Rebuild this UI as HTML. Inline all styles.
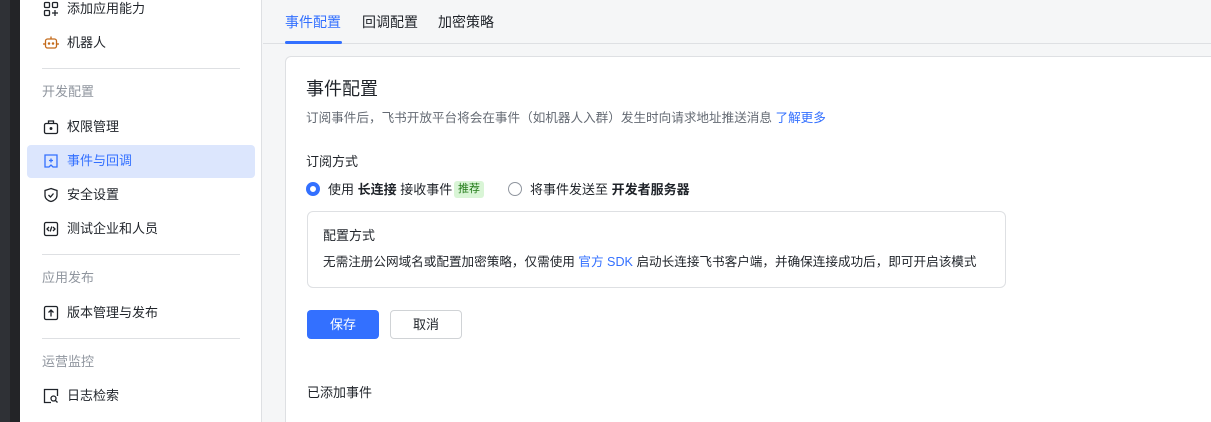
<!DOCTYPE html><html style="width:1211px;height:422px;overflow:hidden"><head><meta charset="utf-8"><style>
*{margin:0;padding:0;box-sizing:border-box}
body{width:1211px;height:422px;overflow:hidden;background:#f5f6f7;font-family:"Liberation Sans","Noto Sans CJK SC",sans-serif;color:#1f2329;position:relative}
.a{position:absolute;white-space:nowrap;line-height:1}
.si{font-size:13px;left:67px}
.sec{font-size:13px;left:42px;color:#8f959e}
.dv{position:absolute;left:42px;width:198px;height:1px;background:#dee0e3}
.ic{position:absolute;left:43px;width:16px;height:16px}
</style></head><body>
<div style="position:absolute;left:0;top:0;width:10px;height:422px;background:#2f3136"></div>
<div style="position:absolute;left:10px;top:0;width:10px;height:422px;background:#232427"></div>
<div style="position:absolute;left:20px;top:0;width:242px;height:422px;background:#fff;border-right:1px solid #dee0e3"></div>
<svg class="ic" style="top:1px" viewBox="0 0 16 16" fill="none" stroke="#1f2329" stroke-width="1.3"><rect x="1.5" y="1.5" width="5" height="5" rx="1"/><rect x="9.5" y="1.5" width="5" height="5" rx="1"/><rect x="1.5" y="9.5" width="5" height="5" rx="1"/><path d="M12 9v6M9 12h6"/></svg>
<div class="a si" style="top:2px">添加应用能力</div>
<svg class="ic" style="top:35px" viewBox="0 0 16 16" fill="none" stroke="#c36a1a" stroke-width="1.3"><rect x="2.5" y="4" width="11" height="9" rx="2"/><path d="M8 1.5v2.5M1 8v2M15 8v2"/><circle cx="6" cy="8.5" r=".6" fill="#c36a1a"/><circle cx="10" cy="8.5" r=".6" fill="#c36a1a"/></svg>
<div class="a si" style="top:36px">机器人</div>
<div class="dv" style="top:68px"></div>
<div class="a sec" style="top:85px">开发配置</div>
<svg class="ic" style="top:119px" viewBox="0 0 16 16" fill="none" stroke="#1f2329" stroke-width="1.3"><rect x="1.5" y="4.5" width="13" height="10" rx="1.5"/><path d="M5.5 4.5V2h5v2.5"/><circle cx="8" cy="9.5" r=".8" fill="#1f2329"/></svg>
<div class="a si" style="top:120px">权限管理</div>
<div style="position:absolute;left:27px;top:145px;width:228px;height:33px;background:#dce6fd;border-radius:4px"></div>
<svg class="ic" style="top:153px" viewBox="0 0 16 16" fill="none" stroke="#3370ff" stroke-width="1.3"><path d="M2 2h12v12h-4l-2-2-2 2H2z"/><path d="M8 5.5v4M6 7.5h4"/></svg>
<div class="a si" style="top:154px;color:#3370ff">事件与回调</div>
<svg class="ic" style="top:187px" viewBox="0 0 16 16" fill="none" stroke="#1f2329" stroke-width="1.3"><path d="M8 1.5l6 2v5c0 3-3 5.5-6 6-3-.5-6-3-6-6v-5z"/><path d="M5.5 8l2 2 3-3.5"/></svg>
<div class="a si" style="top:188px">安全设置</div>
<svg class="ic" style="top:221px" viewBox="0 0 16 16" fill="none" stroke="#1f2329" stroke-width="1.3"><rect x="1.5" y="1.5" width="13" height="13" rx="1.5"/><path d="M6 6l-2 2 2 2M10 6l2 2-2 2M8.8 5.5l-1.6 5"/></svg>
<div class="a si" style="top:222px">测试企业和人员</div>
<div class="dv" style="top:254px"></div>
<div class="a sec" style="top:271px">应用发布</div>
<svg class="ic" style="top:305px" viewBox="0 0 16 16" fill="none" stroke="#1f2329" stroke-width="1.3"><rect x="1.5" y="1.5" width="13" height="13" rx="1.5"/><path d="M8 11.5V5M5.5 7.5L8 5l2.5 2.5"/></svg>
<div class="a si" style="top:306px">版本管理与发布</div>
<div class="dv" style="top:338px"></div>
<div class="a sec" style="top:355px">运营监控</div>
<svg class="ic" style="top:388px" viewBox="0 0 16 16" fill="none" stroke="#1f2329" stroke-width="1.3"><path d="M8 14.5H1.5v-13h13V8"/><circle cx="10.5" cy="10.5" r="2.5"/><path d="M12.3 12.3l2.2 2.2"/></svg>
<div class="a si" style="top:389px">日志检索</div>

<div style="position:absolute;left:263px;top:43px;width:948px;height:1px;background:#dee0e3"></div>
<div class="a" style="left:285px;top:15px;font-size:14px;color:#3370ff">事件配置</div>
<div style="position:absolute;left:285px;top:41px;width:57px;height:3px;background:#3370ff;border-radius:2px"></div>
<div class="a" style="left:362px;top:15px;font-size:14px">回调配置</div>
<div class="a" style="left:438px;top:15px;font-size:14px">加密策略</div>

<div style="position:absolute;left:285px;top:56px;width:940px;height:366px;background:#fff;border:1px solid #dee0e3;border-bottom:none;border-radius:6px 6px 0 0"></div>
<div class="a" style="left:306px;top:80px;font-size:18px">事件配置</div>
<div class="a" style="left:306px;top:112px;font-size:12.6px;color:#646a73">订阅事件后，飞书开放平台将会在事件（如机器人入群）发生时向请求地址推送消息 <span style="color:#3370ff">了解更多</span></div>
<div class="a" style="left:306px;top:155px;font-size:13px">订阅方式</div>
<div style="position:absolute;left:306px;top:182px;width:14px;height:14px;border-radius:50%;border:4px solid #3370ff;background:#fff"></div>
<div class="a" style="left:328px;top:183px;font-size:13px">使用 <b>长连接</b> 接收事件</div>
<div class="a" style="left:454px;top:181px;font-size:11px;background:#d9f5d6;color:#237b19;padding:3px 4px;border-radius:3px">推荐</div>
<div style="position:absolute;left:508px;top:182px;width:14px;height:14px;border-radius:50%;border:1px solid #8f959e"></div>
<div class="a" style="left:530px;top:183px;font-size:13px">将事件发送至 <b>开发者服务器</b></div>
<div style="position:absolute;left:307px;top:211px;width:699px;height:77px;border:1px solid #dee0e3;border-radius:6px"></div>
<div class="a" style="left:323px;top:229px;font-size:13px">配置方式</div>
<div class="a" style="left:323px;top:256px;font-size:12.6px">无需注册公网域名或配置加密策略，仅需使用 <span style="color:#3370ff">官方 SDK</span> 启动长连接飞书客户端，并确保连接成功后，即可开启该模式</div>
<div class="a" style="left:307px;top:310px;width:72px;height:29px;background:#3370ff;border-radius:4px;color:#fff;font-size:13px;line-height:29px;text-align:center">保存</div>
<div class="a" style="left:390px;top:310px;width:72px;height:29px;border:1px solid #d0d3d6;border-radius:4px;font-size:13px;line-height:27px;text-align:center;background:#fff">取消</div>
<div class="a" style="left:307px;top:386px;font-size:13px">已添加事件</div>
</body></html>
